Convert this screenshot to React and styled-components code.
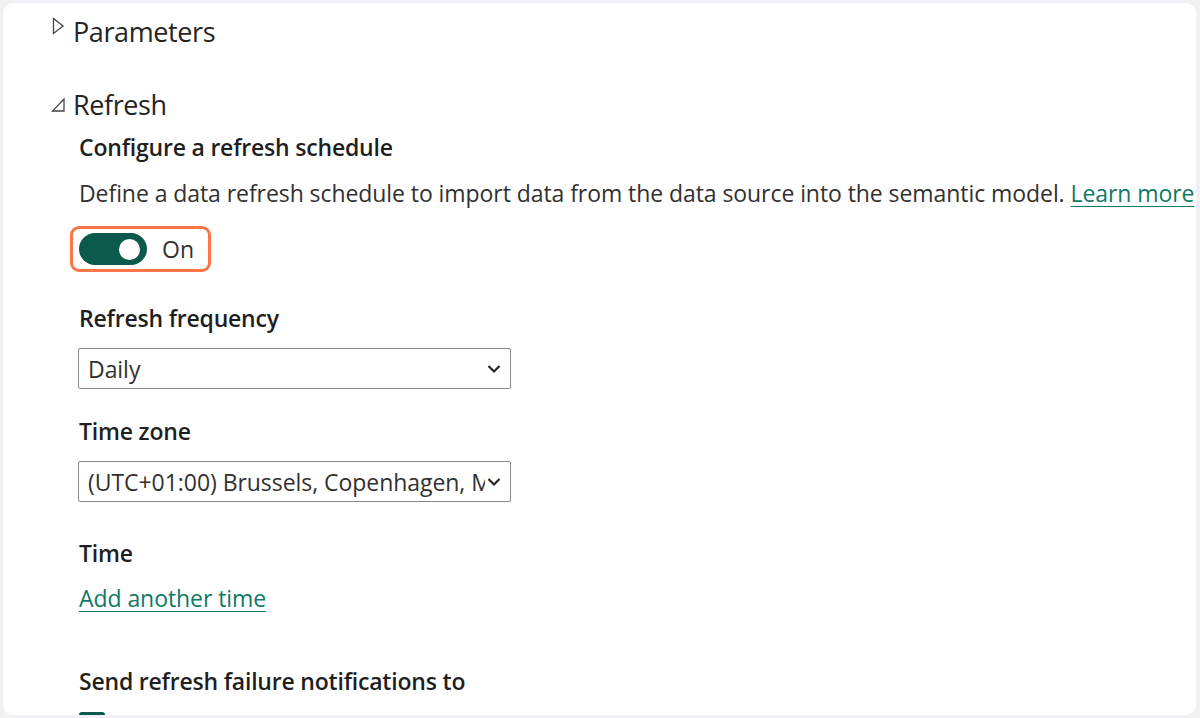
import React from "react";
import styled, { createGlobalStyle } from "styled-components";

const Global = createGlobalStyle`
  html, body {
    margin: 0;
    padding: 0;
    background: #f1f1f5;
  }
  body {
    font-family: "Open Sans", "Noto Sans", sans-serif;
    color: #252423;
  }
`;

const Frame = styled.div`
  width: 1200px;
  height: 718px;
  padding: 3px 4px 3px 3px;
  box-sizing: border-box;
`;

const Card = styled.div`
  height: 100%;
  background: #fff;
  border-radius: 10px;
  overflow: hidden;
  padding-left: 48px;
  box-sizing: border-box;
`;

const SectionHead = styled.div`
  display: flex;
  align-items: center;
  gap: 7px;
  margin-top: ${(p) => p.top}px;
  height: 36px;
  font-size: 27px;
  letter-spacing: -0.4px;
  color: #252423;
`;

const Caret = styled.svg`
  width: 15px;
  height: 18px;
  flex: none;
  margin-top: ${(p) => p.shift || 0}px;
`;

const Body = styled.div`
  padding-left: 28px;
  display: flex;
  flex-direction: column;
  align-items: flex-start;
`;

const Label = styled.div`
  margin-top: ${(p) => p.top}px;
  height: 30px;
  line-height: 28px;
  font-size: 23px;
  font-weight: 600;
  letter-spacing: -0.2px;
  color: #1f1f1f;
`;

const Text = styled.div`
  margin-top: ${(p) => p.top}px;
  height: 30px;
  line-height: 28px;
  font-size: 23px;
  letter-spacing: -0.07px;
  color: #323130;
  white-space: nowrap;
`;

const Link = styled.a`
  color: #117865;
  text-decoration: underline;
  text-underline-offset: 4px;
  text-decoration-thickness: 1px;
  cursor: pointer;
`;

const Highlight = styled.div`
  margin-top: 17px;
  margin-left: -9px;
  display: flex;
  align-items: center;
  gap: 15px;
  padding: 4px 14px 4px 6px;
  border: 3px solid #fa7548;
  border-radius: 9px;
`;

const Switch = styled.div`
  width: 68px;
  height: 32px;
  border-radius: 16px;
  background: #0b5a4b;
  position: relative;
`;

const Knob = styled.span`
  position: absolute;
  top: 6px;
  right: 7px;
  width: 21px;
  height: 21px;
  border-radius: 50%;
  background: #fff;
`;

const SwitchText = styled.span`
  font-size: 23px;
  color: #323130;
`;

const Select = styled.div`
  margin-top: 14px;
  width: 433px;
  height: ${(p) => p.h}px;
  box-sizing: border-box;
  border: 1px solid #8a8886;
  border-radius: 2px;
  display: flex;
  align-items: center;
  padding: 0 9px 0 9px;
  font-size: 23px;
  letter-spacing: -0.05px;
  color: #323130;
  margin-left: -1px;
`;

const SelectValue = styled.span`
  flex: 1;
  min-width: 0;
  overflow: hidden;
  white-space: nowrap;
`;

const Chevron = styled.svg`
  width: 14px;
  height: 10px;
  flex: none;
  margin-left: 2px;
`;

const Checkbox = styled.div`
  margin-top: 15px;
  width: 26px;
  height: 26px;
  border-radius: 3px;
  background: #0b5a4b;
`;

const Down = () => (
  <Chevron viewBox="0 0 14 10">
    <polyline
      points="1.5,2 7,7.5 12.5,2"
      fill="none"
      stroke="#252423"
      strokeWidth="2.2"
    />
  </Chevron>
);

export default function App() {
  return (
    <>
      <Global />
      <Frame>
        <Card>
          <SectionHead top={10}>
            <Caret viewBox="0 0 15 18" shift={-10}>
              <polygon
                points="2.5,1.5 12,9 2.5,16.5"
                fill="none"
                stroke="#444"
                strokeWidth="1.3"
              />
            </Caret>
            <span>Parameters</span>
          </SectionHead>

          <SectionHead top={37}>
            <Caret viewBox="0 0 15 18">
              <polygon
                points="13,4 13,16 1.5,16"
                fill="none"
                stroke="#444"
                strokeWidth="1.3"
              />
            </Caret>
            <span>Refresh</span>
          </SectionHead>

          <Body>
            <Label top={11}>Configure a refresh schedule</Label>
            <Text top={16}>
              Define a data refresh schedule to import data from the data
              source into the semantic model. <Link>Learn more</Link>
            </Text>

            <Highlight>
              <Switch>
                <Knob />
              </Switch>
              <SwitchText>On</SwitchText>
            </Highlight>

            <Label top={32}>Refresh frequency</Label>
            <Select h={41}>
              <SelectValue>Daily</SelectValue>
              <Down />
            </Select>

            <Label top={28}>Time zone</Label>
            <Select h={41}>
              <SelectValue>(UTC+01:00) Brussels, Copenhagen, M</SelectValue>
              <Down />
            </Select>

            <Label top={37}>Time</Label>
            <Text top={15}>
              <Link>Add another time</Link>
            </Text>

            <Label top={53}>Send refresh failure notifications to</Label>
            <Checkbox />
          </Body>
        </Card>
      </Frame>
    </>
  );
}
